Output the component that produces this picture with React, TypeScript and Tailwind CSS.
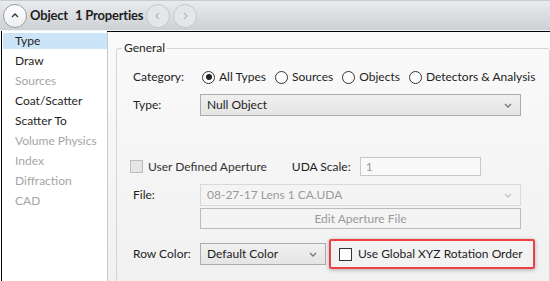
import React from "react";

const font = { fontFamily: 'Lato, "Noto Sans", sans-serif' };

function Chevron({ dir, color }: { dir: "up" | "left" | "right" | "down"; color: string }) {
	const pts = {
		up: "3,7 6,4 9,7",
		down: "3,5 6,8 9,5",
		left: "7,3 4,6 7,9",
		right: "5,3 8,6 5,9",
	}[dir];
	return (
		<svg width="12" height="12" viewBox="0 0 12 12">
			<polyline points={pts} fill="none" stroke={color} strokeWidth="1.3" />
		</svg>
	);
}

function RoundButton({ dir, disabled }: { dir: "up" | "left" | "right"; disabled?: boolean }) {
	return (
		<div
			className={`w-[24px] h-[24px] shrink-0 rounded-full border flex items-center justify-center ${
				disabled ? "border-[#c4c6c9] bg-[#e4e6e9]" : "border-[#9a9ca0] bg-gradient-to-b from-white to-[#eceef0]"
			}`}
		>
			<Chevron dir={dir} color={disabled ? "#b8babd" : "#333"} />
		</div>
	);
}

function Radio({ checked, label }: { checked?: boolean; label: string }) {
	return (
		<div className="flex items-center gap-[4px] whitespace-nowrap">
			<div className="w-[13px] h-[13px] rounded-full border border-[#333] bg-white flex items-center justify-center">
				{checked && <div className="w-[6px] h-[6px] rounded-full bg-[#222]" />}
			</div>
			<span>{label}</span>
		</div>
	);
}

function Select({ value, disabled, className }: { value: string; disabled?: boolean; className: string }) {
	return (
		<div
			className={`h-[22px] border flex items-center justify-between pl-[6px] pr-[6px] ${
				disabled
					? "border-[#d9d9d9] bg-[#f4f4f4] text-[#9a9a9a]"
					: "border-[#acacac] bg-gradient-to-b from-[#f0f0f0] to-[#e5e5e5] text-[#1e1e1e]"
			} ${className}`}
		>
			<span>{value}</span>
			<Chevron dir="down" color={disabled ? "#c2c2c2" : "#777"} />
		</div>
	);
}

const items = [
	{ name: "Type", enabled: true, selected: true },
	{ name: "Draw", enabled: true },
	{ name: "Sources", enabled: false },
	{ name: "Coat/Scatter", enabled: true },
	{ name: "Scatter To", enabled: true },
	{ name: "Volume Physics", enabled: false },
	{ name: "Index", enabled: false },
	{ name: "Diffraction", enabled: false },
	{ name: "CAD", enabled: false },
];

export default function App() {
	return (
		<div className="w-[550px] h-[281px] overflow-hidden flex flex-col bg-white text-[12px] text-[#1e1e1e]" style={font}>
			<div className="h-[31px] shrink-0 flex items-center pl-[3px] gap-[3px] bg-gradient-to-b from-[#e9ebee] to-[#cdd0d4] border-t border-[#c9cbce] border-b border-b-[#f2f2f2]">
				<RoundButton dir="up" />
				<span className="font-bold text-[13px] tracking-[-0.2px]">Object</span>
				<span className="font-bold text-[13px] tracking-[-0.2px] ml-[4px]">1 Properties</span>
				<RoundButton dir="left" disabled />
				<RoundButton dir="right" disabled />
			</div>
			<div className="flex-1 flex border-t border-l border-black ml-[1px] min-h-0">
				<div className="w-[105px] shrink-0 bg-white pl-[1px] mt-[-1px]">
					{items.map((it) =>
						it.selected ? (
							<div key={it.name} className="h-[20px] py-[2px]">
								<div className="h-[16px] bg-[#cce4f7] flex items-center pl-[12px]">{it.name}</div>
							</div>
						) : (
							<div
								key={it.name}
								className={`h-[20px] flex items-center pl-[12px] ${it.enabled ? "text-[#1e1e1e]" : "text-[#a6a6a6]"}`}
							>
								{it.name}
							</div>
						),
					)}
				</div>
				<div className="flex-1 border-l border-[#c8c8c8] bg-gradient-to-b from-[#fafafa] to-[#f1f1f1] pl-[8px] pt-[7px]">
					<fieldset className="border border-[#d5d5d5] rounded-[3px] h-[260px] pl-[16px]">
						<legend className="ml-[-11px] px-[2px]">General</legend>
						<div className="flex items-center h-[18px] mt-[11px]">
							<span className="w-[69px]">Category:</span>
							<div className="flex items-center gap-[9px]">
								<Radio checked label="All Types" />
								<Radio label="Sources" />
								<Radio label="Objects" />
								<Radio label="Detectors & Analysis" />
							</div>
						</div>
						<div className="flex items-center mt-[8px]">
							<span className="w-[67px]">Type:</span>
							<Select value="Null Object" className="w-[321px]" />
						</div>
						<div className="flex items-center mt-[41px] h-[19px] whitespace-nowrap">
							<div className="w-[13px] h-[13px] border border-[#bcbcbc] bg-[#e6e6e6] ml-[-3px]" />
							<span className="ml-[5px] text-[#333]">User Defined Aperture</span>
							<span className="ml-[25px]">UDA Scale:</span>
							<div className="ml-[9px] w-[121px] h-[19px] border border-[#c8c8c8] bg-[#f9f9f9] text-[#999] pl-[5px] flex items-center">
								1
							</div>
						</div>
						<div className="flex items-center mt-[8px]">
							<span className="w-[67px]">File:</span>
							<Select disabled value="08-27-17 Lens 1 CA.UDA" className="w-[321px]" />
						</div>
						<div className="flex mt-[2px] pl-[67px]">
							<div className="w-[321px] h-[21px] border border-[#bcbcbc] bg-[#f4f4f4] text-[#9a9a9a] flex items-center justify-center">
								Edit Aperture File
							</div>
						</div>
						<div className="flex items-center mt-[10px] whitespace-nowrap">
							<span className="w-[67px]">Row Color:</span>
							<Select value="Default Color" className="w-[126px]" />
							<div className="ml-[3px] w-[206px] h-[30px] border-2 border-[#ee3f46] rounded-[2px] shadow-[0_1px_4px_rgba(0,0,0,0.3)] flex items-center pl-[8px] gap-[6px]">
								<div className="w-[13px] h-[13px] border border-[#333] bg-white" />
								<span>Use Global XYZ Rotation Order</span>
							</div>
						</div>
					</fieldset>
				</div>
			</div>
		</div>
	);
}
